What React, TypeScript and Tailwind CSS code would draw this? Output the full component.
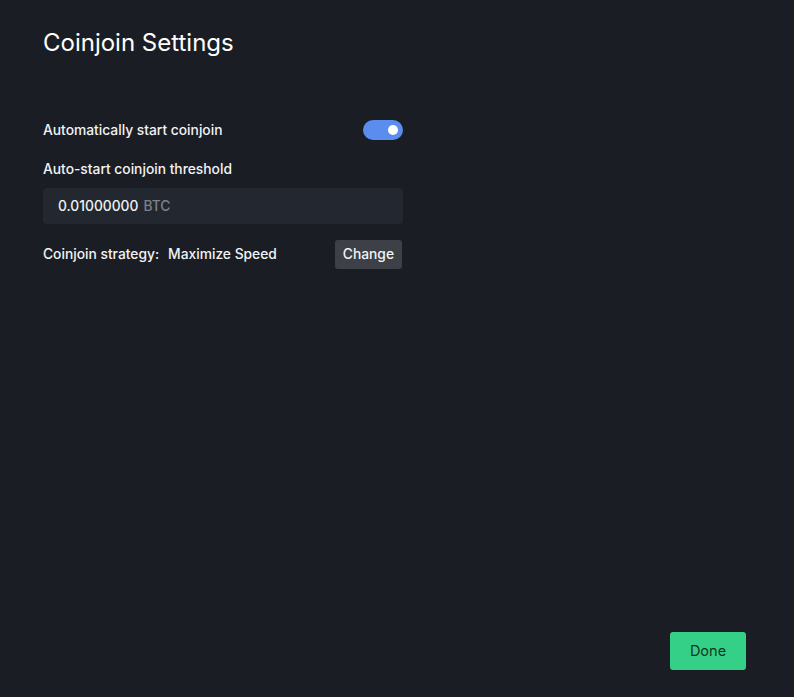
export default function App() {
  return (
    <div
      className="w-[794px] h-[697px] bg-[#1a1e24] text-[#f2f3f5] flex flex-col relative"
      style={{ fontFamily: 'Inter, "Noto Sans", sans-serif' }}
    >
      <div className="pl-[43px] pt-[28px]">
        <h1 className="text-[24px] leading-[30px] font-normal text-white">Coinjoin Settings</h1>
      </div>

      <div className="pl-[43px] pt-[60px] w-[403px] flex flex-col">
        <div className="flex items-center justify-between h-[24px]">
          <span className="text-[13.8px] font-medium">Automatically start coinjoin</span>
          <div className="w-[40px] h-[20px] rounded-full bg-[#5b8def] flex items-center justify-end pr-[5px]">
            <div className="w-[10px] h-[10px] rounded-full bg-white" />
          </div>
        </div>

        <div className="mt-[17px] text-[13.8px] font-medium h-[20px] leading-[20px]">
          Auto-start coinjoin threshold
        </div>

        <div className="mt-[9px] h-[36px] rounded-[4px] bg-[#232830] flex items-center px-[15px] text-[13.8px] font-medium">
          <span className="text-[#eef0f3]">0.01000000</span>
          <span className="ml-[5px] text-[#7c818a]">BTC</span>
        </div>

        <div className="mt-[16px] flex items-center justify-between h-[29px]">
          <div className="text-[13.8px] font-medium flex gap-[9px]">
            <span>Coinjoin strategy:</span>
            <span>Maximize Speed</span>
          </div>
          <button className="h-[29px] px-[8px] rounded-[3px] bg-[#3d4047] text-[13.8px] font-medium text-[#f2f3f5] mr-[1px]">
            Change
          </button>
        </div>
      </div>

      <div className="mt-auto flex justify-end pr-[48px] pb-[27px]">
        <button className="w-[76px] h-[38px] rounded-[3px] bg-[#34d088] text-[14.5px] text-[#10351f]">
          Done
        </button>
      </div>
    </div>
  )
}
